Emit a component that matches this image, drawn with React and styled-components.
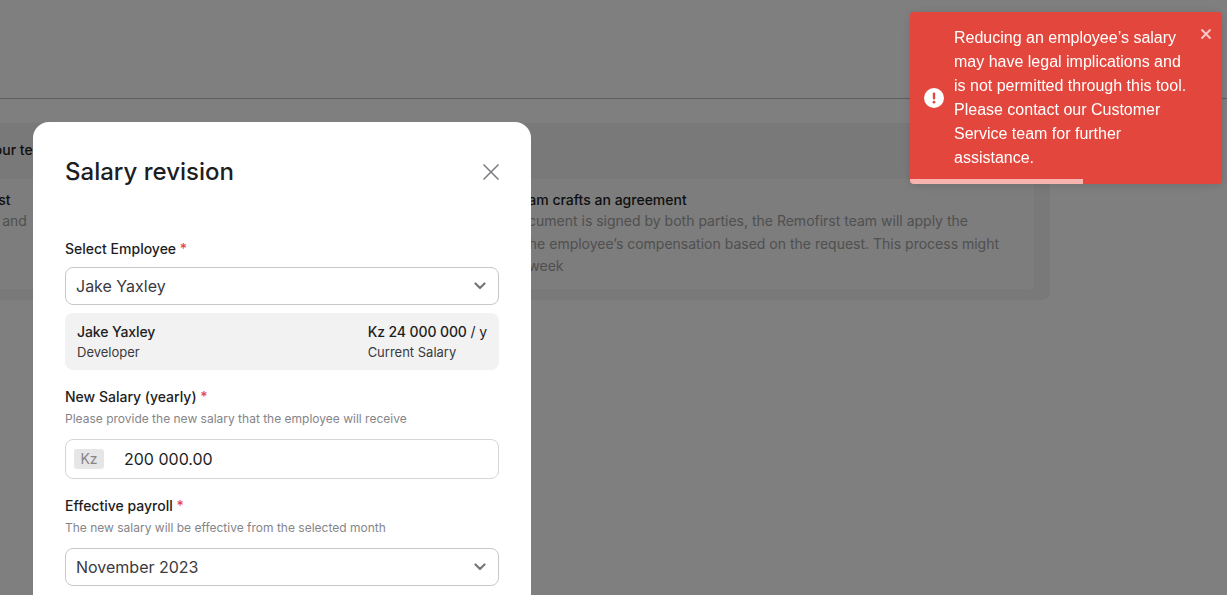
import React from "react";
import styled, { createGlobalStyle } from "styled-components";

const Global = createGlobalStyle`
  html, body { margin: 0; padding: 0; height: 100%; overflow: hidden; background: #fff; }
  body { font-family: Inter, "Liberation Sans", sans-serif; color: #1d1e22; }
  * { box-sizing: border-box; }
`;

const Page = styled.div`
  width: 1227px;
  height: 595px;
  overflow: hidden;
  background: #fff;
`;
const TopBar = styled.header`
  height: 99px;
  border-bottom: 1px solid #bdbdbd;
`;
const Panel = styled.section`
  width: 1234px;
  margin: 24px 0 0 -184px;
  height: 177px;
  background: #f2f2f2;
  border-radius: 8px;
  padding: 16px 16px 11px;
  display: flex;
  flex-direction: column;
`;
const PanelTitle = styled.p`
  margin: 0;
  height: 40px;
  padding-top: 1px;
  font-size: 14px;
  line-height: 20px;
  font-weight: 500;
  white-space: nowrap;
`;
const Cards = styled.div`
  display: grid;
  grid-template-columns: 583px 1fr;
  gap: 16px;
  height: 110px;
`;
const Card = styled.article`
  background: #fafafa;
  border-radius: 4px;
  padding: 11px 16px 11px ${(p) => p.$left}px;
  overflow: hidden;
`;
const CardTitle = styled.h3`
  margin: 0;
  font-size: 14px;
  line-height: 20px;
  font-weight: 500;
  color: #1d1e22;
  white-space: nowrap;
`;
const CardText = styled.p`
  margin: 0;
  font-size: 14px;
  line-height: 22.5px;
  color: #a0a0a0;
  white-space: nowrap;
`;

const Backdrop = styled.div`
  position: fixed;
  inset: 0;
  background: rgba(0, 0, 0, 0.5);
  padding: 122px 0 0 33px;
  overflow: hidden;
`;
const Modal = styled.div`
  width: 498px;
  background: #fff;
  border-radius: 16px;
  padding: 32px;
  height: 600px;
`;
const ModalHead = styled.div`
  display: flex;
  align-items: center;
  justify-content: space-between;
  height: 36px;
  margin-bottom: 49px;
`;
const Title = styled.h2`
  margin: 0;
  font-size: 24px;
  line-height: 36px;
  font-weight: 500;
  color: #1d1e22;
`;
const CloseBtn = styled.button`
  border: 0;
  background: none;
  padding: 0;
  width: 18px;
  height: 18px;
  display: block;
  margin-right: -1px;
  color: #7c7c80;
`;
const Label = styled.label`
  display: block;
  font-size: 14px;
  line-height: 20px;
  font-weight: 500;
  color: #1d1e22;
`;
const Star = styled.span`
  color: #e5484d;
`;
const Hint = styled.div`
  font-size: 12px;
  line-height: 16px;
  margin: 4px 0 12px;
  color: #858589;
`;
const Field = styled.div`
  margin-top: 17px;
`;
const SelectBox = styled.div`
  height: 38px;
  margin-top: 8px;
  border: 1px solid #c8c8c8;
  border-radius: 8px;
  display: flex;
  align-items: center;
  justify-content: space-between;
  padding: 0 12px 0 10px;
  font-size: 16px;
  color: #3a3a3e;
`;
const InfoBox = styled.div`
  margin-top: 8px;
  height: 57px;
  padding: 9px 12px 8px;
  background: #f2f2f2;
  border-radius: 8px;
  display: flex;
  justify-content: space-between;
`;
const InfoCol = styled.div`
  display: flex;
  flex-direction: column;
`;
const InfoMain = styled.div`
  font-size: 14px;
  line-height: 20px;
  font-weight: 500;
  letter-spacing: -0.1px;
  color: #1d1e22;
`;
const InfoThin = styled.span`
  font-weight: 400;
`;
const InfoSub = styled.div`
  font-size: 13px;
  line-height: 20px;
  color: #3a3a3e;
`;
const AmountBox = styled.div`
  margin-top: 8px;
  height: 40px;
  border: 1px solid #d6d6d6;
  border-radius: 8px;
  display: flex;
  align-items: center;
  padding: 0 8px;
  gap: 20px;
  font-size: 16px;
  color: #1d1e22;
`;
const Prefix = styled.span`
  width: 30px;
  height: 20px;
  border-radius: 3px;
  background: #e6e6e6;
  color: #858589;
  font-size: 14px;
  line-height: 20px;
  text-align: center;
`;

const Toast = styled.div`
  position: fixed;
  top: 12px;
  left: 910px;
  width: 312px;
  height: 172px;
  background: #e3463c;
  border-radius: 4px;
  box-shadow: 0 1px 10px rgba(0, 0, 0, 0.1), 0 2px 15px rgba(0, 0, 0, 0.05);
  overflow: hidden;
  display: flex;
  align-items: center;
  padding: 0 36px 0 14px;
  gap: 10px;
  color: #fff;
  font-family: "Liberation Sans", Arial, sans-serif;
  font-size: 16px;
  line-height: 24px;
`;
const ToastIcon = styled.svg`
  width: 20px;
  height: 20px;
  flex: none;
`;
const ToastText = styled.div`
  width: 240px;
  flex: none;
  margin-top: -1px;
`;
const ToastClose = styled.svg`
  position: absolute;
  top: 16px;
  right: 10px;
  width: 12px;
  height: 12px;
  opacity: 0.7;
`;
const Progress = styled.div`
  position: absolute;
  left: 0;
  bottom: 0;
  height: 5px;
  background: #f8b5b0;
`;

const Chevron = () => (
  <svg width="12" height="8" viewBox="0 0 12 8" fill="none">
    <path d="M1.5 1.5 L6 6 L10.5 1.5" stroke="#77777b" strokeWidth="2.2" strokeLinecap="round" strokeLinejoin="round" />
  </svg>
);

export default function App() {
  return (
    <Page>
      <Global />
      <TopBar />
      <Panel>
        <PanelTitle>How to raise salary for your team</PanelTitle>
        <Cards>
          <Card $left={21}>
            <CardTitle>Submit a salary request</CardTitle>
            <CardText>Provide salary details, and</CardText>
          </Card>
          <Card $left={16}>
            <CardTitle>Remofirst team crafts an agreement</CardTitle>
            <CardText>Once the document is signed by both parties, the Remofirst team will apply the</CardText>
            <CardText>changes to the employee’s compensation based on the request. This process might</CardText>
            <CardText>take up to a week</CardText>
          </Card>
        </Cards>
      </Panel>
      <Backdrop>
        <Modal>
          <ModalHead>
            <Title>Salary revision</Title>
            <CloseBtn aria-label="Close">
              <svg width="18" height="18" viewBox="0 0 18 18" fill="none">
                <path d="M1.5 1.5 L16.5 16.5 M16.5 1.5 L1.5 16.5" stroke="currentColor" strokeWidth="1.5" />
              </svg>
            </CloseBtn>
          </ModalHead>
          <Label>Select Employee <Star>*</Star></Label>
          <SelectBox>Jake Yaxley<Chevron /></SelectBox>
          <InfoBox>
            <InfoCol>
              <InfoMain>Jake Yaxley</InfoMain>
              <InfoSub>Developer</InfoSub>
            </InfoCol>
            <InfoCol>
              <InfoMain>Kz 24 000 000 <InfoThin>/ y</InfoThin></InfoMain>
              <InfoSub>Current Salary</InfoSub>
            </InfoCol>
          </InfoBox>
          <Field>
            <Label>New Salary (yearly) <Star>*</Star></Label>
            <Hint>Please provide the new salary that the employee will receive</Hint>
            <AmountBox><Prefix>Kz</Prefix>200 000.00</AmountBox>
          </Field>
          <Field>
            <Label>Effective payroll <Star>*</Star></Label>
            <Hint>The new salary will be effective from the selected month</Hint>
            <SelectBox>November 2023<Chevron /></SelectBox>
          </Field>
        </Modal>
      </Backdrop>
      <Toast>
        <ToastIcon viewBox="0 0 20 20">
          <circle cx="10" cy="10" r="10" fill="#fff" />
          <rect x="8.8" y="4.5" width="2.4" height="7" rx="1" fill="#e3463c" />
          <circle cx="10" cy="14.2" r="1.4" fill="#e3463c" />
        </ToastIcon>
        <ToastText>
          Reducing an employee’s salary may have legal implications and is not permitted through this tool. Please contact our Customer Service team for further assistance.
        </ToastText>
        <ToastClose viewBox="0 0 12 12" fill="none">
          <path d="M1.5 1.5 L10.5 10.5 M10.5 1.5 L1.5 10.5" stroke="#fff" strokeWidth="2" />
        </ToastClose>
        <Progress style={{ width: "173px" }} />
      </Toast>
    </Page>
  );
}
